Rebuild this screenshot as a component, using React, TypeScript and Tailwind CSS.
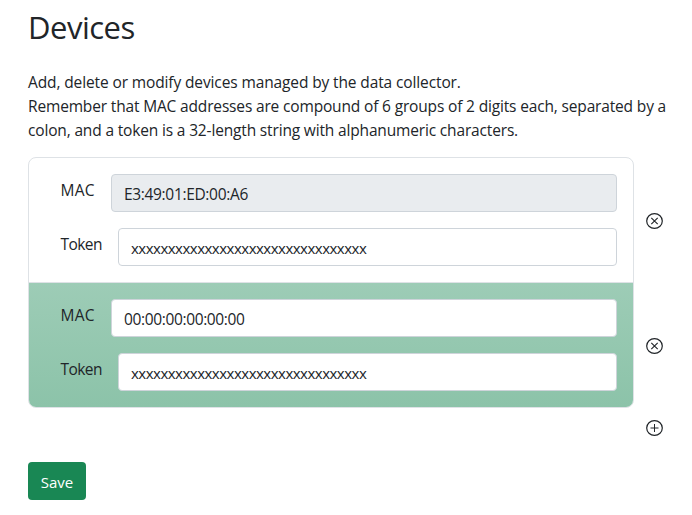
type Device = { mac: string; token: string; isNew: boolean };

const devices: Device[] = [
  { mac: "E3:49:01:ED:00:A6", token: "xxxxxxxxxxxxxxxxxxxxxxxxxxxxxxxx", isNew: false },
  { mac: "00:00:00:00:00:00", token: "xxxxxxxxxxxxxxxxxxxxxxxxxxxxxxxx", isNew: true },
];

function CircleIcon({ kind }: { kind: "remove" | "add" }) {
  return (
    <svg width="17" height="16" viewBox="0 0 17 16" fill="none" stroke="#212529" className="block">
      <ellipse cx="8.5" cy="8" rx="7.8" ry="7.4" strokeWidth="1.2" />
      {kind === "remove" ? (
        <path d="M5.3 4.8l6.4 6.4M11.7 4.8l-6.4 6.4" strokeWidth="1.1" />
      ) : (
        <path d="M4.5 8h8M8.5 4v8" strokeWidth="1" />
      )}
    </svg>
  );
}

function DeviceRow({ device }: { device: Device }) {
  return (
    <div
      className={
        device.isNew
          ? "flex flex-col gap-4 border-t border-[#dee2e6] bg-linear-to-b from-[#9dccb6] to-[#8cc3a9] py-4 pr-4 pl-[31.5px]"
          : "flex flex-col gap-4 py-4 pr-4 pl-[31.5px]"
      }
    >
      <label className="flex h-[38px]">
        <span className="w-[50.5px] shrink-0 pt-1 text-[15.5px] tracking-[0.2px]">MAC</span>
        <input
          readOnly
          disabled={!device.isNew}
          value={device.mac}
          className={
            device.isNew
              ? "min-w-0 flex-1 rounded-[4px] border border-[#ced4da] bg-white px-3 pt-[2px] text-[15.5px] tracking-[-0.36px] outline-none"
              : "min-w-0 flex-1 rounded-[4px] border border-[#ced4da] bg-[#e9ecef] px-3 pt-[2px] text-[15.5px] tracking-[-0.33px] outline-none"
          }
        />
      </label>
      <label className="flex h-[38px]">
        <span className="w-[57.5px] shrink-0 pt-1 text-[15.5px] tracking-[-0.55px]">Token</span>
        <input
          readOnly
          value={device.token}
          className="min-w-0 flex-1 rounded-[4px] border border-[#ced4da] bg-white px-3 pt-[2px] tracking-[-0.5px] outline-none"
        />
      </label>
    </div>
  );
}

export default function App() {
  return (
    <main className="h-[515px] overflow-hidden bg-white pt-[8px] pl-7 font-['Open_Sans','Noto_Sans',sans-serif] text-[15px] leading-6 text-[#212529]">
      <h1 className="h-[38px] text-[31px] leading-[38px] tracking-[-0.5px]">Devices</h1>
      <div className="mt-[24px] h-[72px] text-[15.5px] whitespace-nowrap">
        <p className="tracking-[-0.12px]">Add, delete or modify devices managed by the data collector.</p>
        <p className="tracking-[-0.16px]">Remember that MAC addresses are compound of 6 groups of 2 digits each, separated by a</p>
        <p className="tracking-[-0.16px]">colon, and a token is a 32-length string with alphanumeric characters.</p>
      </div>
      <div className="mt-[15px] flex h-[279px] items-start">
        <div className="w-[606px] overflow-hidden rounded-[8px] border border-[#dee2e6]">
          {devices.map((d) => (
            <DeviceRow key={d.mac} device={d} />
          ))}
        </div>
        <div className="flex flex-col pt-[56px] pl-3">
          <button aria-label="Delete device" className="flex h-[125px] items-start"><CircleIcon kind="remove" /></button>
          <button aria-label="Delete device" className="flex h-[82px] items-start"><CircleIcon kind="remove" /></button>
          <button aria-label="Add device" className="flex"><CircleIcon kind="add" /></button>
        </div>
      </div>
      <button className="mt-[26px] h-[38px] w-[58px] rounded-[4px] bg-[#198754] pt-[2px] text-white">Save</button>
    </main>
  );
}
